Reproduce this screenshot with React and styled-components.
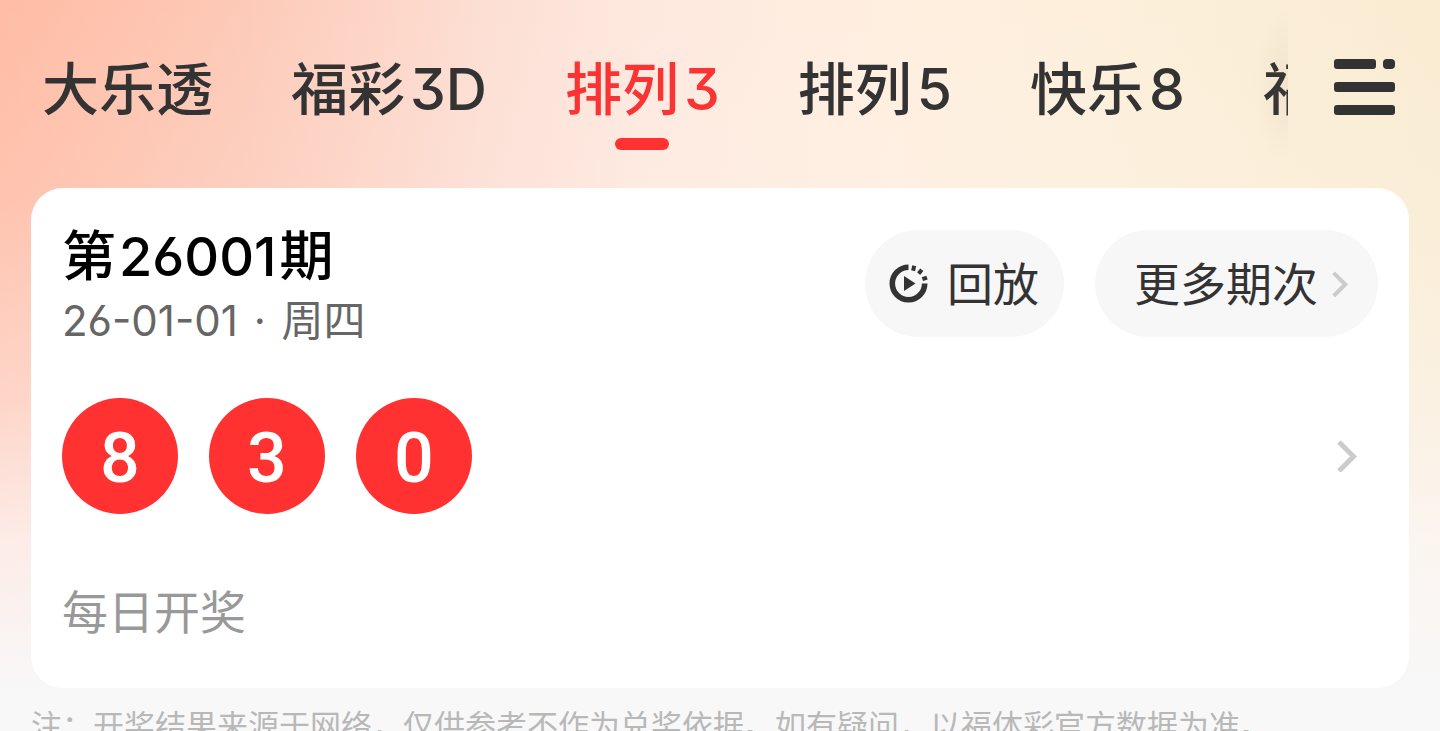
import React from "react";
import styled, { createGlobalStyle } from "styled-components";

const GlobalStyle = createGlobalStyle`
  html { scrollbar-width: none; }
  body { margin: 0; background: #f8f8f8; }
  *, *::before, *::after { box-sizing: border-box; }
  button { border: 0; margin: 0; padding: 0; background: none; color: inherit; font: inherit; cursor: pointer; }
  h1, p { margin: 0; font-weight: 400; }
  svg { display: block; flex: none; }
`;

const Page = styled.div`
  min-height: 100vh;
  font-family: Inter, "Noto Sans CJK SC", sans-serif;
  font-feature-settings: "cv09", "cv03", "ss01";
  color: #333;
  background:
    linear-gradient(180deg, rgba(248, 248, 248, 0) 0, rgba(250, 248, 248, 0.12) 200px, rgba(252, 248, 248, 0.42) 400px, rgba(252, 247, 247, 0.8) 540px, #f8f8f8 690px),
    linear-gradient(90deg, #ffbca5 0%, #fdcab8 17%, #fddfd4 34%, #fee9df 45%, #ffefe0 62%, #fcefda 80%, #faecd2 100%);
`;

const Header = styled.header`
  display: flex;
  align-items: flex-start;
  height: 188px;
  padding-right: 44px;
`;

const Tabs = styled.nav`
  position: relative;
  flex: 1;
  min-width: 0;
  display: flex;
  gap: 78px;
  height: 188px;
  padding: 50px 0 0 42px;
  overflow: hidden;
  &::after {
    content: "";
    position: absolute;
    top: 0;
    right: 0;
    width: 36px;
    height: 170px;
    background: radial-gradient(ellipse 36px 80px at 100% 50%, rgba(120, 110, 90, 0.08), rgba(120, 110, 90, 0));
  }
`;

const Tab = styled.button`
  flex: none;
  display: flex;
  flex-direction: column;
  align-items: center;
  gap: 8px;
  height: 100px;
  font-size: 57px;
  line-height: 80px;
  font-weight: 500;
  white-space: nowrap;
  color: ${(p) => (p.$active ? "#fa3434" : "#333")};
  &::after {
    content: "";
    width: 54px;
    height: 12px;
    border-radius: 6px;
    background: ${(p) => (p.$active ? "#ff3131" : "transparent")};
  }
`;

const TabSuffix = styled.span`
  margin-left: 5px;
`;

const MenuButton = styled.button`
  margin: 58px 0 0 46px;
`;

const Card = styled.main`
  margin: 0 31px;
  padding: 32px 31px 44px;
  border-radius: 32px;
  background: #fff;
`;

const CardHead = styled.div`
  display: flex;
  justify-content: space-between;
  align-items: flex-start;
`;

const Issue = styled.h1`
  font-size: 54px;
  line-height: 74px;
  font-weight: 500;
  color: #000;
`;

const IssueNumber = styled.span`
  margin: 0 3px;
`;

const DrawDate = styled.p`
  font-size: 42px;
  line-height: 54px;
  color: #666;
`;

const Dot = styled.span`
  margin: 0 4px;
`;

const Actions = styled.div`
  display: flex;
  gap: 31px;
  padding-top: 10px;
`;

const Pill = styled.button`
  display: flex;
  align-items: center;
  gap: ${(p) => p.$gap}px;
  height: 107px;
  padding: ${(p) => p.$pad};
  border-radius: 54px;
  background: #f7f7f7;
  font-size: 46px;
  line-height: 64px;
  color: #333;
`;

const Result = styled.div`
  display: flex;
  align-items: center;
  justify-content: space-between;
  margin-top: 50px;
  padding-right: 21px;
`;

const Balls = styled.div`
  display: flex;
  gap: 31px;
`;

const Ball = styled.span`
  display: flex;
  align-items: center;
  justify-content: center;
  width: 116px;
  height: 116px;
  padding-top: 4px;
  border-radius: 50%;
  background: #ff3131;
  color: #fff;
  font-family: Roboto, sans-serif;
  font-size: 70px;
  line-height: 80px;
  font-weight: 500;
`;

const Schedule = styled.p`
  margin-top: 66px;
  font-size: 46px;
  line-height: 64px;
  color: #999;
`;

const Note = styled.footer`
  padding: 16px 31px 0;
  font-size: 31px;
  line-height: 40px;
  font-family: "Noto Sans CJK SC", sans-serif;
  color: #b8b8b8;
`;

const tabs = [
  { name: "大乐透" },
  { name: "福彩", suffix: "3D" },
  { name: "排列", suffix: "3", active: true },
  { name: "排列", suffix: "5" },
  { name: "快乐", suffix: "8" },
  { name: "福彩" },
];

const MenuIcon = () => (
  <svg width="62" height="58" viewBox="0 0 62 58" fill="#333">
    <rect x="0" y="1" width="42" height="10" rx="3" />
    <rect x="49" y="1" width="12" height="10" rx="4" />
    <rect x="0" y="24" width="61" height="10" rx="3" />
    <rect x="0" y="47" width="61" height="10" rx="3" />
  </svg>
);

const ReplayIcon = () => (
  <svg width="40" height="40" viewBox="0 0 40 40" fill="none" stroke="#333">
    <path d="M19.5 3.3A16.2 16.2 0 1 0 35.7 19.5" strokeWidth="5.6" />
    <path d="M24.1 6.8L25.2 1.8M29.6 9.6L32.8 5.8M33.4 15.2L38 13.6" strokeWidth="4" />
    <path d="M15 12V27L26.5 19.5Z" fill="#333" stroke="none" />
  </svg>
);

const Chevron = ({ width, height }) => (
  <svg width={width} height={height} viewBox="0 0 20 32" fill="none" stroke="#ccc" strokeWidth="5">
    <path d="M2 2L16.5 16.5L2 31" />
  </svg>
);

export default function App() {
  return (
    <Page>
      <GlobalStyle />
      <Header>
        <Tabs>
          {tabs.map(({ name, suffix, active }) => (
            <Tab key={name + (suffix || "")} $active={active}>
              <span>{name}{suffix && <TabSuffix>{suffix}</TabSuffix>}</span>
            </Tab>
          ))}
        </Tabs>
        <MenuButton aria-label="全部彩种"><MenuIcon /></MenuButton>
      </Header>
      <Card>
        <CardHead>
          <div>
            <Issue>第<IssueNumber>26001</IssueNumber>期</Issue>
            <DrawDate>26-01-01 <Dot>·</Dot> 周四</DrawDate>
          </div>
          <Actions>
            <Pill $gap={18} $pad="0 25px 0 24px"><ReplayIcon />回放</Pill>
            <Pill $gap={14} $pad="0 30px 0 39px">更多期次<Chevron width={16} height={26} /></Pill>
          </Actions>
        </CardHead>
        <Result>
          <Balls>
            {[8, 3, 0].map((n) => <Ball key={n}>{n}</Ball>)}
          </Balls>
          <Chevron width={20} height={32} />
        </Result>
        <Schedule>每日开奖</Schedule>
      </Card>
      <Note>注：开奖结果来源于网络，仅供参考不作为兑奖依据。如有疑问，以福体彩官方数据为准。</Note>
    </Page>
  );
}
